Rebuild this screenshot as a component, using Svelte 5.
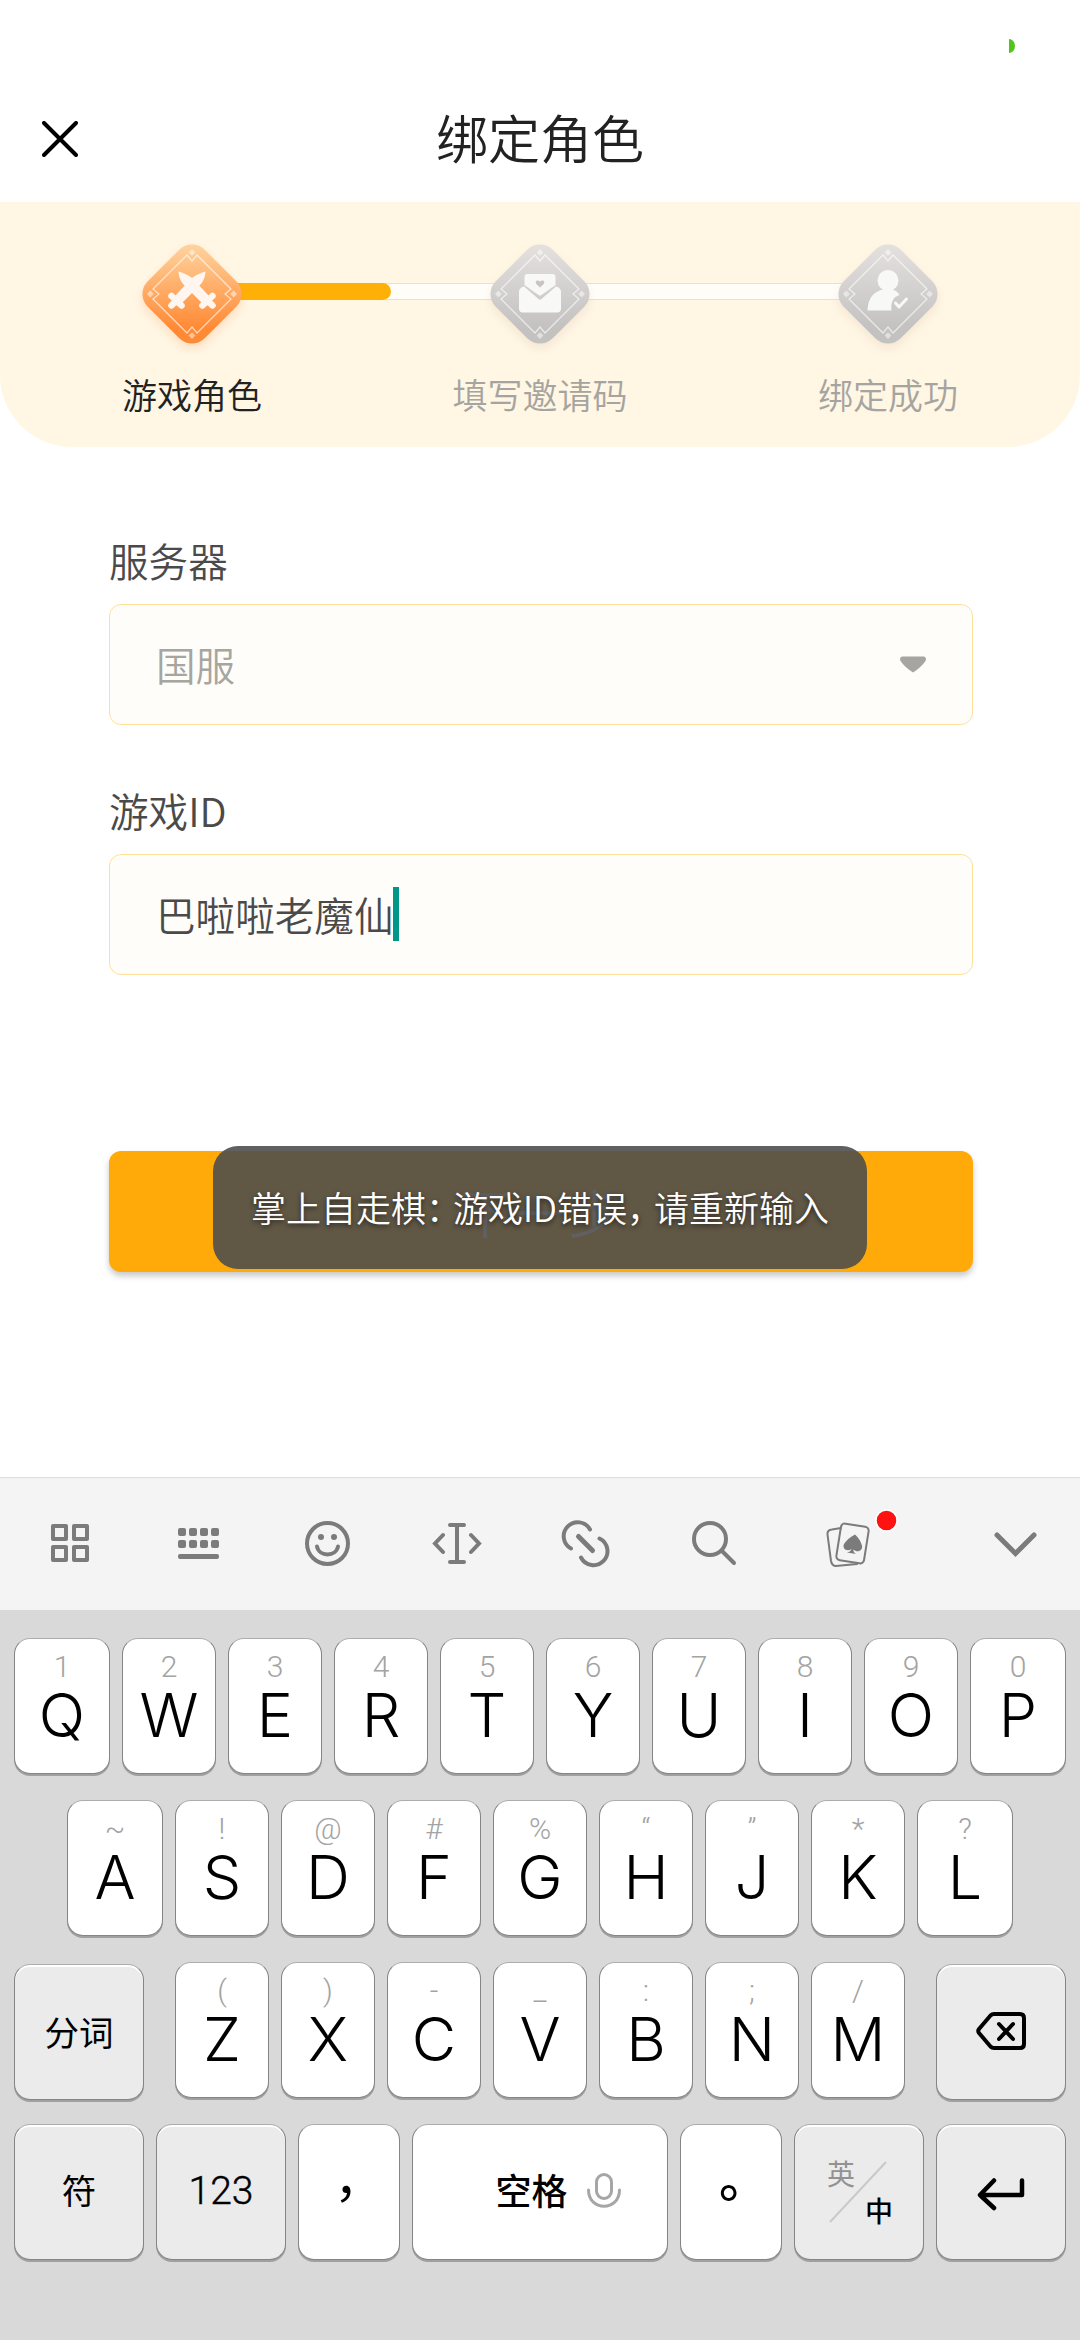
<script lang="ts">
  type Key = { label: string; hint: string };

  const steps = [
    { icon: "swords", label: "游戏角色", active: true },
    { icon: "mail", label: "填写邀请码", active: false },
    { icon: "person", label: "绑定成功", active: false },
  ];

  const toKeys = (letters: string, hints: string): Key[] =>
    [...letters].map((label, i) => ({ label, hint: [...hints][i] }));

  const row1 = toKeys("QWERTYUIOP", "1234567890");
  const row2 = toKeys("ASDFGHJKL", "~!@#%“”*?");
  const row3 = toKeys("ZXCVBNM", "()-_:;/");

  let server = $state("国服");
  let gameId = $state("巴啦啦老魔仙");
</script>

{#snippet letterKey(key: Key)}
  <button class="key letter">
    <span class="hint">{key.hint}</span>
    <span class="main">{key.label}</span>
  </button>
{/snippet}

<div class="screen">
  <div class="status-bar"><span class="battery"></span></div>

  <header>
    <button class="close" aria-label="关闭">
      <svg width="36" height="36" viewBox="0 0 36 36">
        <path d="M2 2L34 34M34 2L2 34" stroke="#000" stroke-width="4" stroke-linecap="round" />
      </svg>
    </button>
    <h1>绑定角色</h1>
  </header>

  <section class="steps">
    <div class="track"><div class="progress"></div></div>
    {#each steps as step}
      <div class="step" class:active={step.active}>
        <svg class="badge" width="100" height="100" viewBox="-50 -50 100 100">
          <defs>
            <linearGradient id="g-{step.icon}" x1="0" y1="0" x2="1" y2="1">
              <stop offset="0.1" stop-color={step.active ? "#ffd09a" : "#e2dfdd"} />
              <stop offset="0.8" stop-color={step.active ? "#ff8a35" : "#c4c2c1"} />
            </linearGradient>
          </defs>
          <rect x="-40.3" y="-40.3" width="80.6" height="80.6" rx="18" transform="rotate(45)" fill="url(#g-{step.icon})" />
          <path
            d="M5 -39L39 -5L33 0L39 5L5 39L0 33L-5 39L-39 5L-33 0L-39 -5L-5 -39L0 -33Z"
            fill="none" stroke="#fff" stroke-opacity="0.65" stroke-width="1.2"
          />
          <path
            d="M0 -45l3.4 3.4l-3.4 3.4l-3.4 -3.4zM0 38.2l3.4 3.4l-3.4 3.4l-3.4 -3.4zM-41.6 -3.4l3.4 3.4l-3.4 3.4l-3.4 -3.4zM41.6 -3.4l3.4 3.4l-3.4 3.4l-3.4 -3.4z"
            fill="#fff" fill-opacity="0.5"
          />
          {#if step.icon === "swords"}
            <g fill="#fff6ef" stroke="#fff6ef" stroke-linecap="round">
              <path stroke="none" d="M-13.5 -22.5Q-4 -20 1 -15L17 2L10 9L-8 -9Q-13 -14 -13.5 -22.5Z" />
              <path stroke="none" d="M13.5 -22.5Q4 -20 -1 -15L-17 2L-10 9L8 -9Q13 -14 13.5 -22.5Z" />
              <path stroke-width="6.5" d="M20.5 2L10.5 11.5M14 5L20.5 11.5M-20.5 2L-10.5 11.5M-14 5L-20.5 11.5" />
            </g>
          {:else if step.icon === "mail"}
            <g fill="#f8f8f7">
              <path d="M-12.5 -20H12.5Q15.5 -20 15.5 -17V-9L1.5 1Q0 2 -1.5 1L-15.5 -9V-17Q-15.5 -20 -12.5 -20Z" />
              <path d="M-16 -7.5L-1.2 5.2Q0 6 1.2 5.2L16 -7.5Q21 -6.5 21 -2V14.5Q21 18.5 17 18.5H-17Q-21 18.5 -21 14.5V-2Q-21 -6.5 -16 -7.5Z" />
              <path fill="#c9c4c2" d="M0 -6.500L-3.800 -10Q-5.300 -13.500 -2.300 -13.500Q-0.800 -13.500 0 -12.300Q0.800 -13.500 2.300 -13.500Q5.300 -13.500 3.800 -10Z" />
            </g>
          {:else}
            <g fill="#f8f8f7">
              <circle cy="-13.5" r="10.5" />
              <path d="M-20.5 16.5Q-20 -1 -5 -4.5H5Q9.5 -3 11.5 1Q2 4 3.5 16.5Z" />
              <path d="M7.5 9L11 13L18.5 5" fill="none" stroke="#f8f8f7" stroke-width="3" stroke-linecap="round" stroke-linejoin="round" />
            </g>
          {/if}
        </svg>
        <span>{step.label}</span>
      </div>
    {/each}
  </section>

  <main>
    <span class="field-label">服务器</span>
    <div class="field">
      <span class="placeholder">{server}</span>
      <svg class="arrow" width="28" height="17" viewBox="0 0 28 17">
        <path d="M3 0.5H25Q28 2 26.5 5Q22 11.5 14 16.5Q6 11.5 1.5 5Q0 2 3 0.5Z" fill="#a6a5a0" />
      </svg>
    </div>

    <span class="field-label second">游戏ID</span>
    <div class="field">
      <span>{gameId}</span><i class="caret"></i>
    </div>

    <button class="submit">下一步</button>
    <div class="toast">
      掌上自走棋<span class="tight">：</span>游戏ID错误<span class="tight">，</span>请重新输入
    </div>
  </main>

  <div class="toolbar">
    <svg width="1080" height="132" viewBox="0 1478 1080 132" fill="none" stroke="#7b7b7b" stroke-width="4" stroke-linecap="round">
      <!-- menu grid -->
      <path d="M53 1526h13v13h-13zM74 1526h13v13h-13zM53 1547h13v13h-13zM74 1547h13v13h-13z" stroke-linejoin="round" />
      <!-- keyboard -->
      <g fill="#7b7b7b" stroke="none">
        {#each [178, 189, 200, 211] as x}
          <rect {x} y="1528" width="8" height="8" rx="2" />
          <rect {x} y="1540" width="8" height="8" rx="2" />
        {/each}
        <rect x="178" y="1554" width="41" height="5" rx="2" />
      </g>
      <!-- emoji -->
      <circle cx="327.5" cy="1543.5" r="20.5" />
      <circle cx="321" cy="1537" r="3" fill="#7b7b7b" stroke="none" />
      <circle cx="334" cy="1537" r="3" fill="#7b7b7b" stroke="none" />
      <path d="M317 1546.5C319 1557 336 1557 338 1546.5" />
      <!-- text cursor -->
      <path d="M457 1525V1562M450 1525H464M450 1562H464M443 1535L435 1543.5L443 1552M471 1535L479 1543.5L471 1552" />
      <!-- link -->
      <path d="M590 1529.5A14 14 0 1 0 571 1548.5M581 1557.5A14 14 0 1 0 599.5 1538.5" />
      <path d="M578.5 1536.5L592.5 1550.5" stroke-width="5" />
      <!-- search -->
      <circle cx="710" cy="1539" r="16" />
      <path d="M722 1551L734 1563" />
      <!-- cards -->
      <g stroke-width="2">
        <path d="M841 1528L832 1529.5Q827 1530 827.5 1534.5L831 1561Q832 1566 836 1566L857 1564" />
        <rect x="838.5" y="1525" width="28" height="37" rx="4" transform="rotate(9 852.5 1543.5)" />
        <path d="M855 1534.5Q848 1538 844 1544C842 1549 847 1552 851.5 1549Q850.5 1552 847 1552.5L856 1554Q853 1552 853.5 1549.5C857 1553 863 1551 862 1545.5Q860 1539 855 1534.5Z" fill="#7b7b7b" stroke="none" />
      </g>
      <circle cx="886.5" cy="1520.5" r="10.5" fill="#ff1212" stroke="#fff" stroke-width="1.5" />
      <!-- collapse -->
      <path d="M997 1535L1015.5 1553.5L1034 1535" stroke-width="5" />
    </svg>
  </div>

  <div class="keyboard">
    <div class="row">
      {#each row1 as key}{@render letterKey(key)}{/each}
    </div>
    <div class="row inset">
      {#each row2 as key}{@render letterKey(key)}{/each}
    </div>
    <div class="row">
      <button class="key fn low">分词</button>
      <div class="letters">
        {#each row3 as key}{@render letterKey(key)}{/each}
      </div>
      <button class="key fn low" aria-label="删除">
        <svg width="50" height="38" viewBox="0 0 50 38" fill="none" stroke="#000" stroke-width="4" stroke-linecap="round" stroke-linejoin="round">
          <path d="M18 2H44Q48 2 48 6V32Q48 36 44 36H18Q16 36 14.5 34.5L3 21Q1.5 19 3 17L14.5 3.5Q16 2 18 2ZM23 12L37 27M37 12L23 27" />
        </svg>
      </button>
    </div>
    <div class="row bottom">
      <button class="key fn">符</button>
      <button class="key fn digits">123</button>
      <button class="key punct"><span class="comma">，</span></button>
      <button class="key space">
        <span>空格</span>
        <svg width="34" height="35" viewBox="0 0 34 35" fill="none" stroke="#a6a6a6" stroke-width="3" stroke-linecap="round">
          <rect x="9.5" y="1.5" width="15" height="24" rx="7.5" />
          <path d="M1.5 17C1.5 38.5 32.5 38.5 32.5 17" />
        </svg>
      </button>
      <button class="key punct"><span class="period">。</span></button>
      <button class="key fn lang">
        <span class="en">英</span>
        <svg width="58" height="62" viewBox="0 0 58 62"><path d="M1 61L57 1" stroke="#c9c9c9" stroke-width="2" /></svg>
        <span class="zh">中</span>
      </button>
      <button class="key fn enter" aria-label="换行">
        <svg width="48" height="34" viewBox="0 0 48 34" fill="none" stroke="#000" stroke-width="4.5" stroke-linecap="round" stroke-linejoin="round">
          <path d="M45 3.5V18H3M17 3.5L3 18L17 31" />
        </svg>
      </button>
    </div>
  </div>
</div>

<style>
  :global(body) {
    background: #fff;
  }
  .screen {
    width: 1080px;
    height: 2340px;
    display: flex;
    flex-direction: column;
    overflow: hidden;
    font-family: "Noto Sans CJK SC", sans-serif;
    font-weight: 350;
    color: #4a4a4a;
    background: #fff;
  }
  button {
    font: inherit;
    padding: 0;
    border: none;
    background: none;
    color: #000;
  }
  svg {
    display: block;
    flex-shrink: 0;
  }

  .status-bar {
    height: 76px;
    display: flex;
    justify-content: flex-end;
    padding: 39px 65px 0 0;
    box-sizing: border-box;
  }
  .battery {
    width: 6px;
    height: 14px;
    background: #53c41a;
    border-radius: 0 6px 6px 0 / 0 7px 7px 0;
  }
  header {
    height: 126px;
    display: grid;
    grid-template-columns: 120px 1fr 120px;
    align-items: center;
  }
  .close {
    padding: 0 0 1px 42px;
  }
  h1 {
    margin: 0 0 4px;
    font-size: 52px;
    line-height: 76px;
    font-weight: 350;
    text-align: center;
    color: #222;
  }

  .steps {
    position: relative;
    height: 245px;
    box-sizing: border-box;
    padding: 42px 18px 0;
    display: flex;
    background: #fff6e4;
    border-radius: 0 0 72px 72px;
  }
  .track {
    position: absolute;
    left: 192px;
    right: 192px;
    top: 81px;
    height: 17px;
    box-sizing: border-box;
    border: 1px solid #ffe09a;
    background: #fffdf8;
  }
  .progress {
    width: 198px;
    height: 17px;
    margin-top: -1px;
    background: #ffb006;
    border-radius: 0 9px 9px 0;
  }
  .step {
    position: relative;
    flex: 1;
    display: flex;
    flex-direction: column;
    align-items: center;
    font-size: 35px;
    line-height: 50px;
    color: #a5a4a0;
  }
  .step span {
    margin-top: 25px;
  }
  .step.active {
    color: #222;
  }
  .badge {
    overflow: visible;
    margin-left: -1px;
    filter: drop-shadow(0 5px 5px rgba(190, 150, 130, 0.15));
  }
  .active .badge {
    filter: drop-shadow(0 5px 5px rgba(255, 130, 50, 0.2));
  }

  main {
    position: relative;
    height: 1030px;
    box-sizing: border-box;
    padding: 83px 107px 0 109px;
    display: flex;
    flex-direction: column;
  }
  .field-label {
    font-size: 39.6px;
    line-height: 60px;
    margin-bottom: 14px;
  }
  .second {
    margin-top: 55px;
  }
  .field {
    height: 121px;
    box-sizing: border-box;
    padding: 0 45px 0 46px;
    display: flex;
    align-items: center;
    font-size: 39.6px;
    border: 1px solid #ffe09a;
    border-radius: 12px;
    background: #fffdf9;
  }
  .field span {
    margin-bottom: 2px;
  }
  .placeholder {
    color: #a6a5a0;
  }
  .arrow {
    margin-left: auto;
  }
  .caret {
    width: 6px;
    height: 54px;
    margin-bottom: 1px;
    background: #009688;
  }
  .submit {
    height: 121px;
    margin-top: 176px;
    font-size: 52px;
    letter-spacing: 2px;
    color: #fff;
    background: #ffaa08;
    border-radius: 12px;
    box-shadow: 0 4px 6px rgba(0, 0, 0, 0.22);
  }
  .toast {
    position: absolute;
    left: 213px;
    top: 699px;
    width: 654px;
    height: 123px;
    border-radius: 25px;
    background: rgba(76, 76, 78, 0.89);
    color: #fff;
    font-size: 35px;
    line-height: 122px;
    text-align: center;
    white-space: nowrap;
    text-shadow: 0 2px 5px rgba(0, 0, 0, 0.6);
  }
  .tight {
    letter-spacing: -8px;
  }

  .toolbar {
    height: 133px;
    box-sizing: border-box;
    border-top: 1px solid #dedede;
    background: #f4f4f4;
  }
  .keyboard {
    flex: 1;
    padding: 28px 14px 0;
    display: flex;
    flex-direction: column;
    gap: 24px;
    background: #d9d9d9;
  }
  .row,
  .letters {
    display: flex;
    justify-content: space-between;
    gap: 12px;
    height: 138px;
  }
  .row.inset {
    padding: 0 53px;
  }
  .key {
    height: 136px;
    box-sizing: border-box;
    display: flex;
    align-items: center;
    justify-content: center;
    border: 1px solid #858585;
    border-top-color: #adadad;
    border-radius: 16px;
    background: #fff;
    box-shadow: 0 2px 0 #a0a0a0;
    font-size: 34.5px;
    font-weight: 400;
  }
  .letter {
    width: 94px;
    flex-direction: column;
    justify-content: flex-start;
  }
  .row > .letter:first-child,
  .row > .letter:last-child {
    width: 96px;
  }
  .hint {
    margin-top: 16px;
    font: 300 30px/24px Roboto, sans-serif;
    color: #a3a3a3;
  }
  .main {
    margin-top: 11px;
    font: 300 61px/50px Inter, sans-serif;
  }
  .fn {
    width: 130px;
    background: #ebebeb;
    box-shadow: 0 2px 0 #a0a0a0, inset 0 2px 0 #fff;
  }
  .low {
    margin-top: 2px;
    padding-bottom: 2px;
  }
  .bottom .key {
    padding-bottom: 6px;
  }
  .bottom .digits {
    font: 300 39px Roboto, sans-serif;
    padding-bottom: 3px;
    -webkit-text-stroke: 0.4px #000;
  }
  .punct {
    width: 102px;
  }
  .comma,
  .period {
    font-size: 50px;
    line-height: 50px;
  }
  .comma {
    margin: -28px 0 0 20px;
  }
  .period {
    margin: -28px 0 0 26px;
    font-weight: 500;
  }
  .space {
    width: 256px;
    padding-left: 36px;
    gap: 19px;
    font-size: 36px;
    font-weight: 500;
  }
  .space svg {
    margin-top: 3px;
  }
  .bottom .lang {
    position: relative;
    padding-bottom: 0;
    font-size: 28px;
    line-height: 28px;
  }
  .lang svg {
    margin-right: 2px;
  }
  .en,
  .zh {
    position: absolute;
  }
  .en {
    left: 32px;
    top: 34px;
    color: #929292;
  }
  .zh {
    left: 70px;
    top: 71px;
    font-weight: 500;
  }
  .enter svg {
    margin-top: 10px;
  }
</style>
